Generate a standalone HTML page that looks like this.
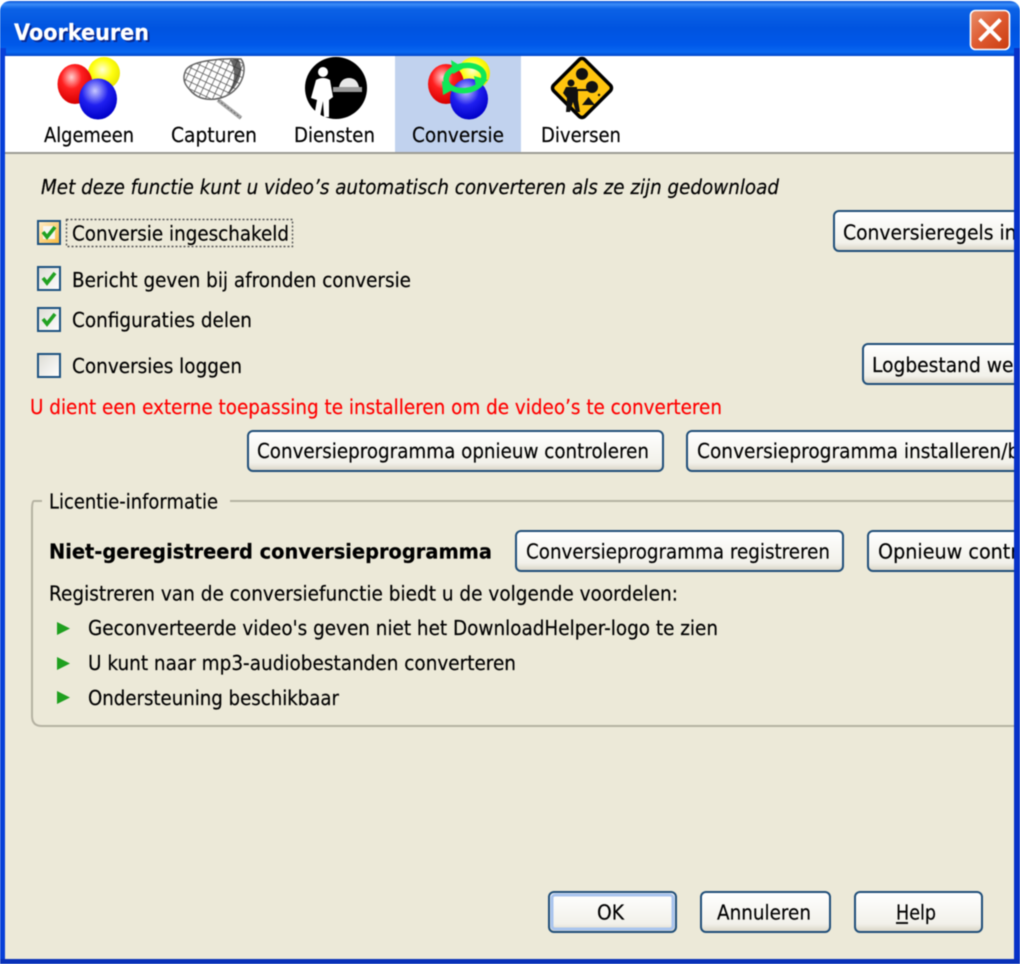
<!DOCTYPE html>
<html><head><meta charset="utf-8"><title>Voorkeuren</title>
<style>
html,body{margin:0;padding:0;width:1020px;height:964px;overflow:hidden;background:#fff}
svg{display:block;filter:blur(.5px)}
text{font-family:"DejaVu Sans","Liberation Sans",sans-serif;font-size:20.5px;fill:#000;stroke:#000;stroke-width:.2px}
.b{font-weight:bold}
</style></head><body>
<svg width="1020" height="964" viewBox="0 0 1020 964" xmlns="http://www.w3.org/2000/svg">
<defs>
<linearGradient id="tb" x1="0" y1="0" x2="0" y2="1">
<stop offset="0" stop-color="#0A55D8"/><stop offset=".06" stop-color="#3A8CF8"/><stop offset=".14" stop-color="#0C62E6"/><stop offset=".5" stop-color="#0054E0"/><stop offset=".8" stop-color="#0058EA"/><stop offset=".93" stop-color="#0A68F0"/><stop offset="1" stop-color="#0044C8"/>
</linearGradient>
<linearGradient id="btn" x1="0" y1="0" x2="0" y2="1"><stop offset="0" stop-color="#FFFFFF"/><stop offset=".8" stop-color="#F2F1EA"/><stop offset="1" stop-color="#D8D3C4"/></linearGradient>
<linearGradient id="cb" x1="0" y1="0" x2="1" y2="1"><stop offset="0" stop-color="#DDDCD4"/><stop offset="1" stop-color="#FFFFFF"/></linearGradient>
<linearGradient id="cbh" x1="0" y1="0" x2="1" y2="1"><stop offset="0" stop-color="#FFF0CF"/><stop offset="1" stop-color="#F8B636"/></linearGradient>
<linearGradient id="x" x1="0" y1="0" x2="1" y2="1"><stop offset="0" stop-color="#E8906C"/><stop offset=".5" stop-color="#DE5A30"/><stop offset="1" stop-color="#C93C10"/></linearGradient>
<radialGradient id="red" cx=".4" cy=".33" r=".65"><stop offset="0" stop-color="#FFD0D0"/><stop offset=".45" stop-color="#FF2020"/><stop offset="1" stop-color="#D80000"/></radialGradient>
<radialGradient id="yel" cx=".45" cy=".4" r=".65"><stop offset="0" stop-color="#FFFFD8"/><stop offset=".5" stop-color="#FFFF10"/><stop offset="1" stop-color="#E4E000"/></radialGradient>
<radialGradient id="blu" cx=".42" cy=".3" r=".7"><stop offset="0" stop-color="#C8C8FF"/><stop offset=".5" stop-color="#2020F0"/><stop offset="1" stop-color="#0000C8"/></radialGradient>
<pattern id="mesh" width="6.5" height="6.5" patternUnits="userSpaceOnUse" patternTransform="rotate(25)"><path d="M0 0H6.5M0 0V6.5" stroke="#555" stroke-width="1.5" fill="none"/></pattern>
<clipPath id="cl"><rect x="0" y="0" width="1014" height="964"/></clipPath>
</defs>

<!-- window frame -->
<path d="M0 964V14Q0 2 14 1H1006Q1020 2 1020 14V964Z" fill="#0831D9"/>
<rect x="0" y="1" width="1020" height="55" rx="10" fill="url(#tb)"/>
<rect x="0" y="48" width="6" height="916" fill="#0840D8"/>
<rect x="1014" y="48" width="6" height="916" fill="#0731C8"/>
<rect x="5" y="56" width="1009" height="903" fill="#ECE9D8"/>
<rect x="0" y="959" width="1020" height="5" fill="#0831B8"/>
<rect x="5" y="56" width="1009" height="97" fill="#fff"/>
<rect x="5" y="152" width="1009" height="2" fill="#9C9C94"/>

<!-- title -->
<text x="16" y="42" class="b" textLength="135" lengthAdjust="spacingAndGlyphs" style="font-size:22px;fill:#0A2A90;stroke:none">Voorkeuren</text>
<text x="14" y="40" class="b" textLength="135" lengthAdjust="spacingAndGlyphs" style="font-size:22px;fill:#fff;stroke:#fff">Voorkeuren</text>

<!-- close -->
<rect x="970.5" y="10.5" width="39" height="39" rx="5" fill="url(#x)" stroke="#fff" stroke-width="1.6"/>
<path d="M981 21L999 39M999 21L981 39" stroke="#fff" stroke-width="4" stroke-linecap="square"/>

<!-- tab highlight -->
<rect x="395" y="56" width="126" height="96" fill="#C1D2EE"/>

<!-- Algemeen icon -->
<ellipse cx="104" cy="73" rx="16" ry="16" fill="url(#yel)"/>
<ellipse cx="75" cy="84" rx="17.5" ry="20" fill="url(#red)"/>
<ellipse cx="98" cy="99" rx="19" ry="20.5" fill="url(#blu)"/>

<!-- Capturen icon -->
<path d="M218 100L241 118" stroke="#aaa" stroke-width="4"/>
<path d="M218 100L241 118" stroke="#666" stroke-width="1" stroke-dasharray="2 2"/>
<path d="M186 70C192 60 225 58 241 59C248 68 243 88 226 96C212 102 198 100 190 90C184 84 182 78 186 70Z" fill="#fff"/>
<path d="M186 70C192 60 225 58 241 59C248 68 243 88 226 96C212 102 198 100 190 90C184 84 182 78 186 70Z" fill="url(#mesh)" stroke="#666" stroke-width="1.5"/>
<path d="M238 59C245 68 240 86 226 95C236 84 236 70 230 60Z" fill="#333" opacity=".75"/>

<!-- Diensten icon -->
<circle cx="336" cy="88" r="31" fill="#000"/>
<circle cx="323" cy="72" r="5" fill="#fff"/>
<path d="M316 80Q323 76 330 80L333 97L329 100V117H324L323 101L320 117H314L317 100L311 98Z" fill="#fff"/>
<path d="M339 87Q341 78 349 78Q357 78 359 87Z" fill="#E8E8E8"/>
<rect x="333" y="87" width="29" height="5" fill="#999"/>

<!-- Conversie icon -->
<ellipse cx="474" cy="73" rx="16" ry="16" fill="url(#yel)"/>
<ellipse cx="446" cy="84" rx="18" ry="20" fill="url(#red)"/>
<ellipse cx="469" cy="99" rx="19" ry="20.5" fill="url(#blu)"/>
<ellipse cx="465" cy="78" rx="19" ry="12.5" transform="rotate(-8 465 78)" fill="none" stroke="#10E858" stroke-width="5.5"/>
<path d="M451 60L464 68L453 74Z M488 80L476 87L474 76Z M443 95L442 81L456 88Z" fill="#10E858"/>

<!-- Diversen icon -->
<rect x="560" y="66" width="44" height="44" rx="4" transform="rotate(45 582 88)" fill="#FFC40E" stroke="#000" stroke-width="3.5"/>
<circle cx="582" cy="74" r="6" fill="#111"/>
<circle cx="592" cy="87" r="6" fill="#111"/>
<circle cx="571" cy="83" r="3.5" fill="#111"/>
<path d="M566 87H577V89H588V91H578V100L580 112H576L573 102L570 112H566L567 98L563 93Z" fill="#111"/>
<path d="M582 105L588.5 97L595 105Z" fill="#111"/>
<circle cx="599" cy="95" r="1.2" fill="#111"/>

<!-- tab labels -->
<text x="44" y="142" textLength="90" lengthAdjust="spacingAndGlyphs">Algemeen</text>
<text x="171" y="142" textLength="86" lengthAdjust="spacingAndGlyphs">Capturen</text>
<text x="294" y="142" textLength="81" lengthAdjust="spacingAndGlyphs">Diensten</text>
<text x="412" y="142" textLength="92" lengthAdjust="spacingAndGlyphs">Conversie</text>
<text x="541" y="142" textLength="80" lengthAdjust="spacingAndGlyphs">Diversen</text>

<!-- body -->
<text x="41" y="194" font-style="italic" textLength="738" lengthAdjust="spacingAndGlyphs">Met deze functie kunt u video’s automatisch converteren als ze zijn gedownload</text>

<!-- checkboxes -->
<rect x="38" y="221" width="22" height="23" fill="url(#cbh)" stroke="#1C5180" stroke-width="2"/>
<rect x="43" y="226" width="12" height="13" fill="#F6F6F0"/>
<path d="M43 232L47 237L55 227" fill="none" stroke="#21A121" stroke-width="3.6"/>
<rect x="66.5" y="219.5" width="226" height="27" fill="none" stroke="#555" stroke-width="1.4" stroke-dasharray="2 2"/>
<text x="72" y="240.5" textLength="217" lengthAdjust="spacingAndGlyphs">Conversie ingeschakeld</text>

<rect x="38" y="267" width="22" height="23" fill="url(#cb)" stroke="#1C5180" stroke-width="2"/>
<path d="M43 278L47 283L55 273" fill="none" stroke="#21A121" stroke-width="3.6"/>
<text x="72" y="287" textLength="339" lengthAdjust="spacingAndGlyphs">Bericht geven bij afronden conversie</text>

<rect x="38" y="308" width="22" height="23" fill="url(#cb)" stroke="#1C5180" stroke-width="2"/>
<path d="M43 319L47 324L55 314" fill="none" stroke="#21A121" stroke-width="3.6"/>
<text x="72" y="327" textLength="180" lengthAdjust="spacingAndGlyphs">Configuraties delen</text>

<rect x="38" y="354" width="22" height="23" fill="url(#cb)" stroke="#1C5180" stroke-width="2"/>
<text x="72" y="373" textLength="170" lengthAdjust="spacingAndGlyphs">Conversies loggen</text>

<text x="30" y="414" textLength="692" lengthAdjust="spacingAndGlyphs" style="fill:#FF0000;stroke:#FF0000">U dient een externe toepassing te installeren om de video’s te converteren</text>

<!-- group box -->
<path d="M42 501H34Q32 501 32 510V716Q32 726 42 726H1014M230 501H1014" fill="none" stroke="#B5B2A2" stroke-width="2"/>
<text x="49" y="508.5" textLength="169" lengthAdjust="spacingAndGlyphs">Licentie-informatie</text>
<text x="49" y="558.5" class="b" textLength="443" lengthAdjust="spacingAndGlyphs">Niet-geregistreerd conversieprogramma</text>
<text x="49" y="600.5" textLength="629" lengthAdjust="spacingAndGlyphs">Registreren van de conversiefunctie biedt u de volgende voordelen:</text>
<path d="M57 622L70 628.5L57 635Z M57 657L70 663.5L57 670Z M57 691L70 697.5L57 704Z" fill="#1FA01F"/>
<text x="88" y="635" textLength="630" lengthAdjust="spacingAndGlyphs">Geconverteerde video's geven niet het DownloadHelper-logo te zien</text>
<text x="88" y="670" textLength="428" lengthAdjust="spacingAndGlyphs">U kunt naar mp3-audiobestanden converteren</text>
<text x="88" y="705" textLength="251" lengthAdjust="spacingAndGlyphs">Ondersteuning beschikbaar</text>

<!-- buttons -->
<g clip-path="url(#cl)">
<rect x="834" y="211" width="220" height="40" rx="5" fill="url(#btn)" stroke="#1F4E79" stroke-width="2"/>
<text x="843" y="239.5" textLength="236" lengthAdjust="spacingAndGlyphs">Conversieregels instellen</text>
<rect x="863" y="344" width="220" height="40" rx="5" fill="url(#btn)" stroke="#1F4E79" stroke-width="2"/>
<text x="872" y="372" textLength="218" lengthAdjust="spacingAndGlyphs">Logbestand weergeven</text>
<rect x="248" y="431" width="415" height="40" rx="5" fill="url(#btn)" stroke="#1F4E79" stroke-width="2"/>
<text x="257" y="458" textLength="392" lengthAdjust="spacingAndGlyphs">Conversieprogramma opnieuw controleren</text>
<rect x="687" y="431" width="420" height="40" rx="5" fill="url(#btn)" stroke="#1F4E79" stroke-width="2"/>
<text x="697" y="458" textLength="400" lengthAdjust="spacingAndGlyphs">Conversieprogramma installeren/bijwerken</text>
<rect x="516" y="531" width="327" height="40" rx="5" fill="url(#btn)" stroke="#1F4E79" stroke-width="2"/>
<text x="526" y="558.5" textLength="304" lengthAdjust="spacingAndGlyphs">Conversieprogramma registreren</text>
<rect x="868" y="531" width="220" height="40" rx="5" fill="url(#btn)" stroke="#1F4E79" stroke-width="2"/>
<text x="878" y="558.5" textLength="200" lengthAdjust="spacingAndGlyphs">Opnieuw controleren</text>
</g>

<rect x="549" y="892" width="127" height="40" rx="5" fill="url(#btn)" stroke="#1F4E79" stroke-width="2"/>
<rect x="552" y="895" width="121" height="34" rx="3" fill="none" stroke="#A9C4EE" stroke-width="3"/>
<text x="597" y="919.5" textLength="27" lengthAdjust="spacingAndGlyphs">OK</text>
<rect x="701" y="892" width="129" height="40" rx="5" fill="url(#btn)" stroke="#1F4E79" stroke-width="2"/>
<text x="717" y="919.5" textLength="94" lengthAdjust="spacingAndGlyphs">Annuleren</text>
<rect x="855" y="892" width="127" height="40" rx="5" fill="url(#btn)" stroke="#1F4E79" stroke-width="2"/>
<text x="896" y="919.5" textLength="40" lengthAdjust="spacingAndGlyphs">Help</text>
<rect x="896" y="922" width="12" height="2" fill="#111"/>
</svg>
</body></html>
